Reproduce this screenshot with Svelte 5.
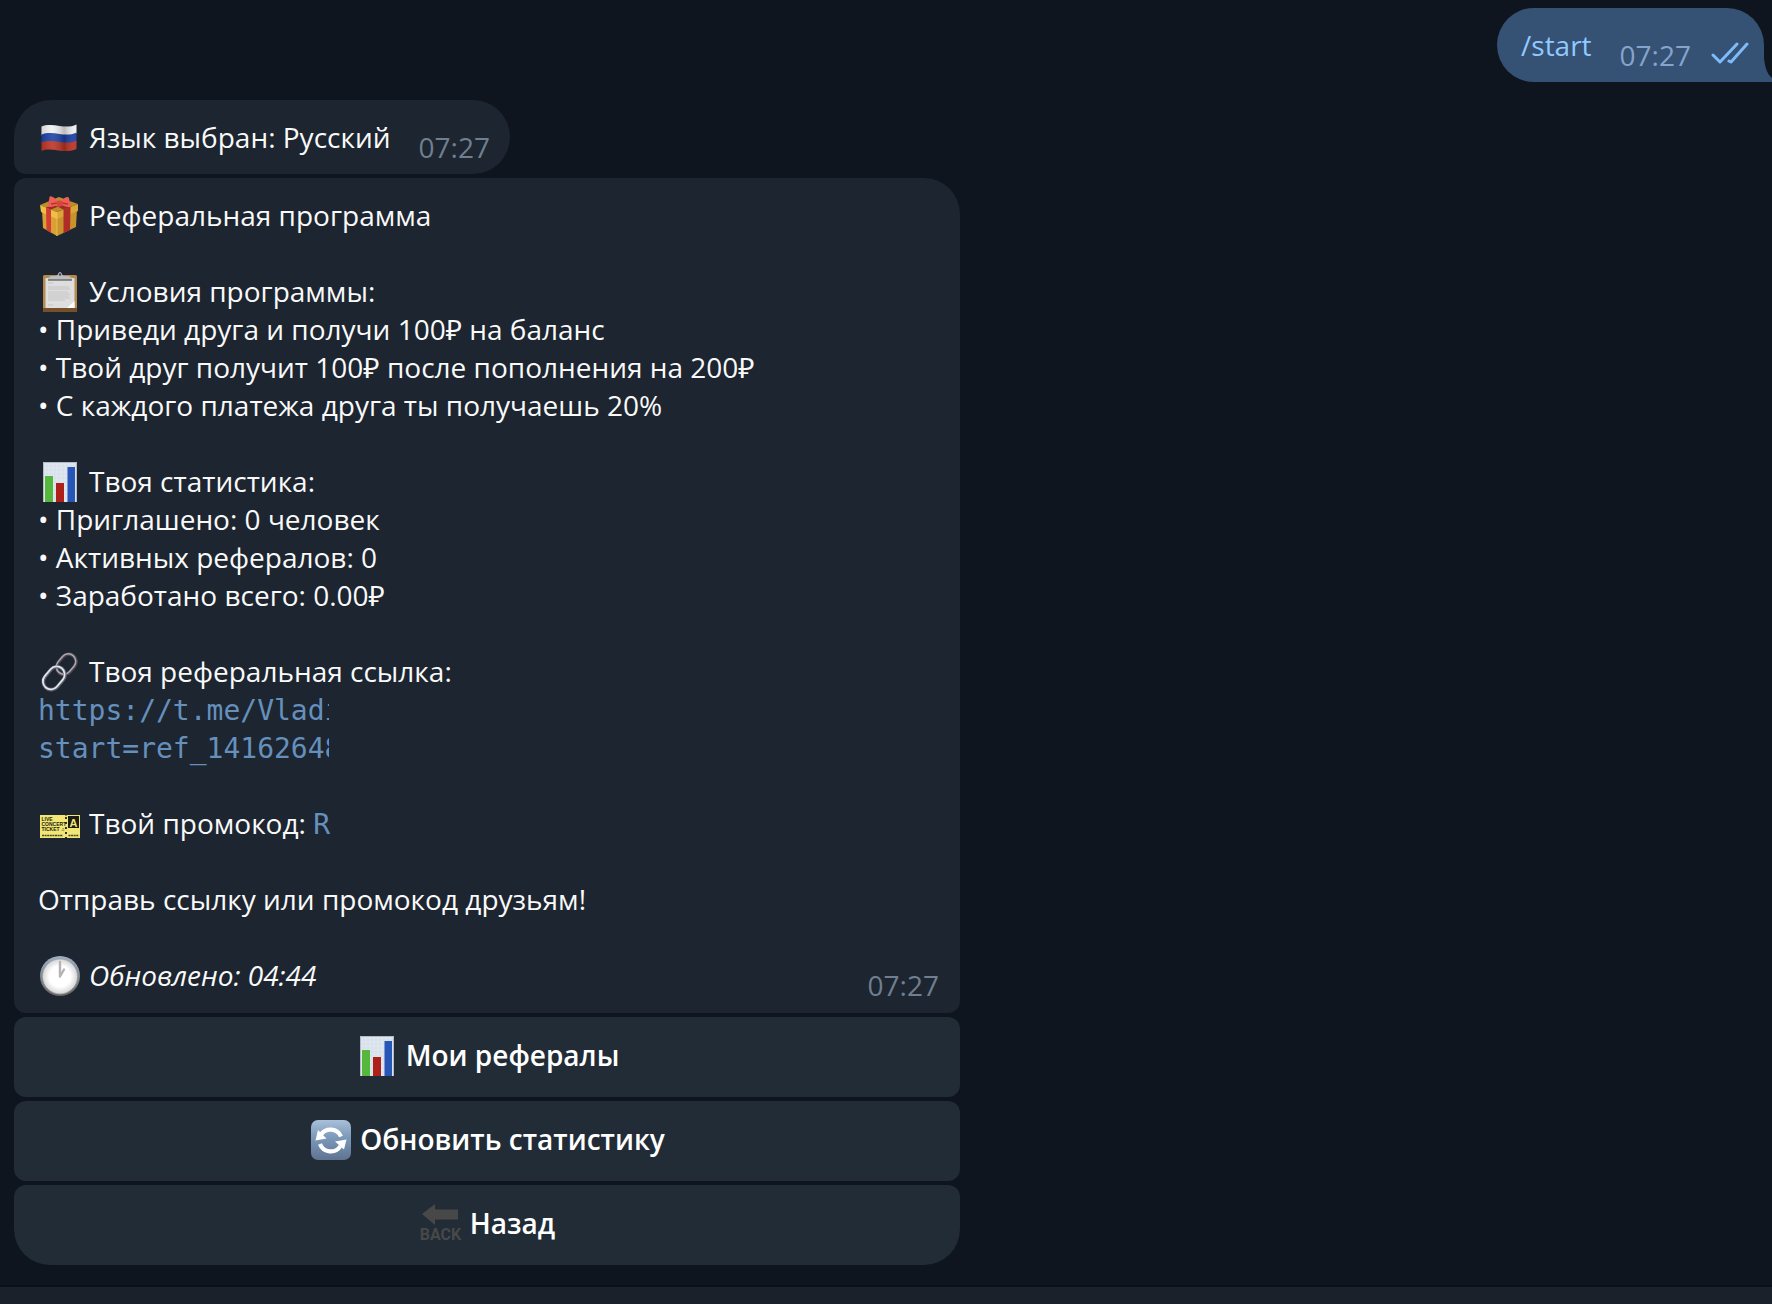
<script>
  const sections = [
    { icon: 'gift', title: 'Реферальная программа', items: [] },
    {
      icon: 'clipboard',
      title: 'Условия программы:',
      items: [
        'Приведи друга и получи 100₽ на баланс',
        'Твой друг получит 100₽ после пополнения на 200₽',
        'С каждого платежа друга ты получаешь 20%'
      ]
    },
    {
      icon: 'chart',
      title: 'Твоя статистика:',
      items: ['Приглашено: 0 человек', 'Активных рефералов: 0', 'Заработано всего: 0.00₽']
    }
  ];

  const actions = [
    { icon: 'chart', label: 'Мои рефералы' },
    { icon: 'refresh', label: 'Обновить статистику' },
    { icon: 'back', label: 'Назад' }
  ];
</script>

{#snippet emoji(name)}
  <svg class="emoji" viewBox="-1 -2 43 42" aria-hidden="true">
    {#if name === 'flag'}
      <defs>
        <linearGradient id="shade" x1="0" x2="1" y1="0" y2="0">
          <stop offset="0" stop-color="#000" stop-opacity=".12" />
          <stop offset=".3" stop-color="#fff" stop-opacity=".1" />
          <stop offset=".65" stop-color="#000" stop-opacity=".22" />
          <stop offset="1" stop-color="#fff" stop-opacity=".05" />
        </linearGradient>
      </defs>
      <path d="M2.500 8.500c6-2.500 12-1.500 18-.5s12 1 17-1.500v9c-6 2.500-12 2.500-18 1.500s-12-2-17 .5z" fill="#f1f1f1" />
      <path d="M2.500 16.500c6-2.500 12-1.500 18-.5s12 1 17-1.500v9c-6 2.500-12 2.500-18 1.500s-12-2-17 .5z" fill="#1c42a6" />
      <path d="M2.500 24.500c6-2.500 12-1.500 18-.5s12 1 17-1.500v8.500c-6 2.500-12 2.500-18 1.500s-12-2-17 .5z" fill="#bd3426" />
      <path d="M2.500 8.500c6-2.500 12-1.500 18-.5s12 1 17-1.500v24.500c-6 2.500-12 2.500-18 1.500s-12-2-17 .5z" fill="url(#shade)" />
    {:else if name === 'gift'}
      <path d="M3 14l15 7v19L4 32z" fill="#d9a034" />
      <path d="M38 13l-20 8v19l19-9z" fill="#c8922c" />
      <path d="M1 9 20 1l19 7-21 8z" fill="#c08c2a" />
      <path d="M1 9 18 16v7L2 16z" fill="#f0bd45" />
      <path d="M39 8 18 16v7l21-8z" fill="#dba636" />
      <path d="M7 11.500l5 2V37l-4.500-3z" fill="#d23d34" />
      <path d="M31.500 11l-7 2.600V37l6.500-3z" fill="#b02c27" />
      <path d="M7 11.500 27 3.500l5 2-20 8zM31.500 11 15 4l-6 2 15.500 7.600z" fill="#9e2a26" />
      <path d="M19 6C16 1 11-1 10.500 1L9 10c0 2 7 1 10-2zM22 6c3-5 7-6 8-4l1.500 8c0 2-7 1-9.500-2z" fill="#ee5f58" />
      <path d="M12 8l6-1M29 8l-6-1" stroke="#b9332f" stroke-width="1.300" />
      <rect x="17.500" y="4.500" width="6" height="6" rx="2" fill="#d9463f" />
      <path d="M18 16v24" stroke="#efc45d" stroke-width=".8" />
    {:else if name === 'clipboard'}
      <rect x="4" y="3" width="34" height="37" rx="1.500" fill="#b58a4e" />
      <rect x="4" y="36" width="34" height="4" rx="1" fill="#76502a" />
      <path d="M6.500 6h29v30h-29z" fill="#dedede" />
      <path d="M28 36h7.500v-7z" fill="#fff" />
      <path d="M9 11h5M9 15h21M9 17h22M9 20h20M9 22h22M9 24h21M9 26h22M9 28h17M9 33h5" stroke="#c2c2c2" stroke-width=".9" />
      <path d="M9 8c0-3 2-4 5-4h3c2 0 2-4 4-4s2 4 4 4h3c3 0 5 1 5 4z" fill="#b9bdc2" />
      <path d="M9 8h24" stroke="#6e6d68" stroke-width="1.500" />
      <circle cx="21" cy="2.500" r="1.200" fill="#3c4350" />
    {:else if name === 'chart'}
      <rect x="4" y="0" width="34" height="40" fill="#dfe6ef" />
      <path d="M4 4h34M4 8h34M4 12h34M4 16h34M4 20h34M4 24h34M4 28h34M4 32h34M4 36h34M8 0v40M12 0v40M16 0v40M20 0v40M24 0v40M28 0v40M32 0v40M36 0v40" stroke="#d3dde8" stroke-width=".6" />
      <path d="M4.500 40V.5h33V40" fill="none" stroke="#b4bac2" />
      <rect x="6" y="14" width="8" height="26" fill="#55b83c" />
      <rect x="17" y="21" width="8" height="19" fill="#ad2118" />
      <rect x="28.500" y="5" width="7.500" height="35" fill="#2556b8" />
    {:else if name === 'link'}
      <g fill="none" transform="rotate(-50 21 20)">
        <rect x="20" y="12.500" width="22" height="15" rx="7.500" stroke="#4d4549" stroke-width="3.600" />
        <rect x="20" y="12" width="22" height="15" rx="7.500" stroke="#a9a9b5" stroke-width="1.500" />
        <rect x="0" y="11.500" width="25" height="16" rx="8" stroke="#5e6068" stroke-width="3.600" />
        <rect x="0" y="11" width="25" height="16" rx="8" stroke="#dfe6f2" stroke-width="1.800" />
      </g>
    {:else if name === 'ticket'}
      <path d="M1 11h25l1 1 1-1h13v23H28l-1-1-1 1H1z" fill="#f1e676" />
      <path d="M27 13v21" stroke="#222" stroke-width="1.800" stroke-dasharray="2 3" />
      <rect x="29" y="12" width="11" height="12" fill="#1c1b14" />
      <text x="34.500" y="23" class="seat">A</text>
      <text x="2.500" y="16.500" class="print">LIVE</text>
      <text x="2.500" y="21.500" class="print">CONCERT</text>
      <text x="2.500" y="26.500" class="print">TICKET ♫</text>
      <path d="M3 31.500h21M29.500 31.500h10" stroke="#4b4725" stroke-width="1.600" stroke-dasharray="2 .6" />
    {:else if name === 'clock'}
      <defs>
        <linearGradient id="rim" x2="0" y2="1"><stop stop-color="#9fb0c4" /><stop offset="1" stop-color="#696461" /></linearGradient>
        <radialGradient id="face"><stop offset=".6" stop-color="#fff" /><stop offset="1" stop-color="#d5d5d5" /></radialGradient>
      </defs>
      <circle cx="21" cy="20" r="20" fill="url(#rim)" />
      <circle cx="21" cy="20.500" r="17.500" fill="url(#face)" stroke="#9a9da0" stroke-width=".7" />
      <path d="M21 6v14.500l4-7" fill="none" stroke="#b4b4b4" stroke-width="2.400" stroke-linejoin="round" stroke-linecap="round" />
    {:else if name === 'refresh'}
      <defs>
        <linearGradient id="tile" x2="0" y2="1"><stop stop-color="#a9c0d8" /><stop offset=".4" stop-color="#7e9cbd" /><stop offset="1" stop-color="#5f7391" /></linearGradient>
      </defs>
      <rect x="1" y="0" width="40" height="40" rx="7" fill="url(#tile)" />
      <path d="M31 16.500A11.500 11.500 0 0 0 11 14.500M10 24a11.500 11.500 0 0 0 20.500 2" fill="none" stroke="#fff" stroke-width="4.200" />
      <path d="M5.500 20.500 8 10l8.500 8.500zM36.500 19.500 25 21.500l9 8z" fill="#fff" />
    {:else if name === 'back'}
      <path d="M2 10 15 0v5.500h23v10H15V21z" fill="#484848" />
      <text x="20.500" y="36" class="back-word">BACK</text>
    {/if}
  </svg>
{/snippet}

<div class="app">
  <main class="chat">
    <article class="bubble outgoing">
      <a class="command" href="#start">/start</a>
      <span class="meta">
        <time>07:27</time>
        <svg class="ticks" viewBox="0 0 38 22" role="img" aria-label="Прочитано">
          <path d="M2 13l7 7L26 2M18 19l2 1L36 2" />
        </svg>
      </span>
      <svg class="tail" viewBox="0 0 8 24" aria-hidden="true"><path d="M0 0c1 9 3 16 8 20v4H0z" /></svg>
    </article>

    <article class="bubble short">
      <p class="line">{@render emoji('flag')}Язык выбран: Русский</p>
      <time class="meta">07:27</time>
    </article>

    <div class="group">
      <article class="bubble long">
        {#each sections as section}
          <section>
            <p class="line">{@render emoji(section.icon)}{section.title}</p>
            {#each section.items as item}
              <p>• {item}</p>
            {/each}
          </section>
        {/each}
        <section>
          <p class="line">{@render emoji('link')}Твоя реферальная ссылка:</p>
          <a class="referral" href="#referral">
            <span><code>https://t.me/Vladi</code></span>
            <span><code>start=ref_14162648</code></span>
          </a>
        </section>
        <p class="line">{@render emoji('ticket')}<span>Твой промокод: <code>R</code></span></p>
        <p>Отправь ссылку или промокод друзьям!</p>
        <div class="last">
          <p class="line">{@render emoji('clock')}<em>Обновлено: 04:44</em></p>
          <time class="meta">07:27</time>
        </div>
      </article>
      {#each actions as action}
        <button type="button">{@render emoji(action.icon)}<span>{action.label}</span></button>
      {/each}
    </div>
  </main>
  <footer class="composer"></footer>
</div>

<style>
  :global(body) {
    margin: 0;
    background: #0e151e;
  }
  .app {
    display: flex;
    flex-direction: column;
    min-height: 100vh;
    overflow: hidden;
    color: #f9f9f9;
    font: 28px/38px 'Open Sans', 'Noto Sans', sans-serif;
  }
  .chat {
    display: flex;
    flex-direction: column;
    align-items: flex-start;
    gap: 4px;
    padding: 8px 8px 20px 14px;
  }
  p {
    margin: 0;
  }
  .bubble {
    box-sizing: border-box;
    display: flex;
    padding: 18px 24px;
    background: #1c2530;
  }
  .outgoing {
    position: relative;
    align-self: flex-end;
    gap: 28px;
    margin-bottom: 14px;
    padding-right: 15px;
    border-radius: 37px 37px 0 37px;
    background: #355174;
  }
  .command {
    color: #90caff;
    text-decoration: none;
  }
  .meta {
    display: flex;
    align-items: center;
    gap: 20px;
    margin: 10px 0 -10px;
    color: #6f7f8f;
  }
  .outgoing .meta {
    color: #84a4cc;
  }
  .ticks {
    width: 38px;
    height: 22px;
    margin-bottom: 4px;
    fill: none;
    stroke: #7dbcfa;
    stroke-width: 3;
    stroke-linecap: round;
    stroke-linejoin: round;
  }
  .tail {
    position: absolute;
    right: -8px;
    bottom: 0;
    width: 8px;
    height: 24px;
    fill: #355174;
  }
  .short {
    gap: 28px;
    padding-right: 20px;
    border-radius: 37px 37px 37px 12px;
  }
  .group {
    display: flex;
    flex-direction: column;
    gap: 4px;
    width: 100%;
    max-width: 946px;
  }
  .long {
    flex-direction: column;
    gap: 38px;
    padding-bottom: 19px;
    border-radius: 12px 36px 12px 12px;
  }
  .line {
    display: flex;
    align-items: center;
    gap: 8px;
  }
  .emoji {
    flex: none;
    width: 43px;
    height: 42px;
    margin: -2px 0;
  }
  code {
    color: #6690bc;
    font-family: 'DejaVu Sans Mono', monospace;
    font-size: 28px;
    line-height: 1;
  }
  .referral {
    display: block;
    width: 291px;
    overflow: hidden;
    text-decoration: none;
    white-space: nowrap;
  }
  .referral span {
    display: block;
  }
  .last {
    display: flex;
    justify-content: space-between;
    margin-right: -3px;
  }
  button {
    display: flex;
    align-items: center;
    justify-content: center;
    gap: 8px;
    min-height: 80px;
    padding: 18px 24px 22px;
    border: 0;
    border-radius: 12px;
    background: #212c37;
    color: #fff;
    font: inherit;
    font-weight: 600;
    cursor: pointer;
  }
  button:last-child {
    border-radius: 12px 12px 36px 36px;
  }
  .composer {
    flex: 1;
    min-height: 16px;
    border-top: 2px solid #0b1017;
    background: #1a212b;
  }
  .print {
    font: 700 5px 'Liberation Sans', sans-serif;
    fill: #25230f;
  }
  .seat {
    font: 700 11px 'Liberation Sans', sans-serif;
    fill: #f1e676;
    text-anchor: middle;
  }
  .back-word {
    font: 700 16px 'Liberation Sans Narrow', Roboto, sans-serif;
    fill: #484848;
    text-anchor: middle;
  }
</style>
